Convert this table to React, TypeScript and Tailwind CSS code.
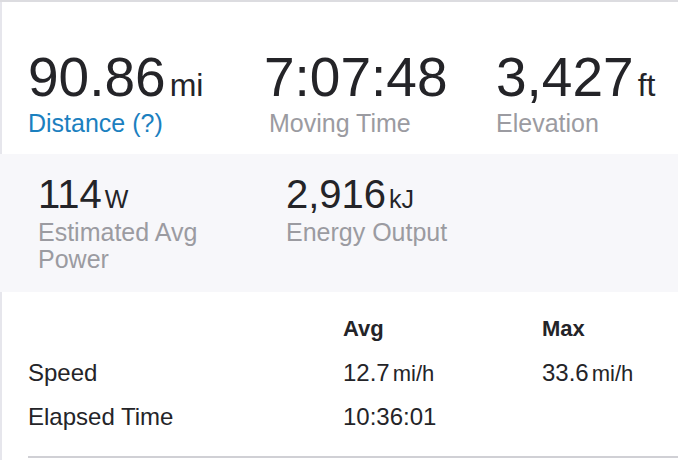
const stats = [
  { value: "90.86", unit: "mi", label: "Distance (?)", link: true, width: "w-[236px]", shift: "" },
  { value: "7:07:48", unit: "", label: "Moving Time", link: false, width: "w-[232px]", shift: "ml-[5px]" },
  { value: "3,427", unit: "ft", label: "Elevation", link: false, width: "w-[170px]", shift: "" },
];

const extra = [
  { value: "114", unit: "W", label: "Estimated Avg Power" },
  { value: "2,916", unit: "kJ", label: "Energy Output" },
];

const rows = [
  { name: "Speed", avg: "12.7", avgUnit: "mi/h", max: "33.6", maxUnit: "mi/h" },
  { name: "Elapsed Time", avg: "10:36:01", avgUnit: "", max: "", maxUnit: "" },
];

function Cell({ value, unit, width }: { value: string; unit: string; width: string }) {
  return (
    <div className={width + " text-[24px] leading-[44px] whitespace-nowrap"}>
      {value}
      {unit && <span className="text-[22px] leading-none ml-[3px]">{unit}</span>}
    </div>
  );
}

export default function App() {
  return (
    <div className="w-[678px] h-[460px] overflow-hidden bg-white text-[#242428] font-['Liberation_Sans',Arial,sans-serif]">
      <div className="h-[2px] bg-[#dcdce0]" />

      {/* main stats */}
      <div className="h-[152px] border-l-2 border-[#e6e6ec] pl-[26px] pt-[48px] flex">
        {stats.map((s) => (
          <div key={s.label} className={s.width}>
            <div className="flex items-baseline whitespace-nowrap">
              <span className="text-[55px] leading-none">{s.value}</span>
              {s.unit && <span className="text-[32px] leading-none ml-[4px]">{s.unit}</span>}
            </div>
            <div
              className={
                "mt-[4px] text-[25px] leading-[28px] whitespace-nowrap " +
                s.shift +
                " " +
                (s.link ? "text-[#1b80bf]" : "text-[#9b9ba1]")
              }
            >
              {s.label}
            </div>
          </div>
        ))}
      </div>

      {/* secondary stats */}
      <div className="h-[138px] bg-[#f7f7fa] pl-[38px] pt-[20px] flex">
        {extra.map((e) => (
          <div key={e.label} className="w-[248px]">
            <div className="flex items-baseline whitespace-nowrap">
              <span className="text-[40px] leading-none">{e.value}</span>
              <span className="text-[25px] leading-none ml-[3px]">{e.unit}</span>
            </div>
            <div className="mt-[5px] max-w-[210px] text-[25px] leading-[27px] text-[#9b9ba1]">
              {e.label}
            </div>
          </div>
        ))}
      </div>

      {/* avg / max table */}
      <div className="h-[168px] border-l-2 border-[#e6e6ec] pl-[26px] pt-[15px]">
        <div className="flex text-[22px] leading-[44px] font-bold">
          <div className="w-[315px]" />
          <div className="w-[199px]">Avg</div>
          <div>Max</div>
        </div>
        {rows.map((r) => (
          <div key={r.name} className="flex">
            <Cell value={r.name} unit="" width="w-[315px]" />
            <Cell value={r.avg} unit={r.avgUnit} width="w-[199px]" />
            <Cell value={r.max} unit={r.maxUnit} width="" />
          </div>
        ))}
        <div className="mt-[17px] h-[2px] bg-[#d0d0d5]" />
      </div>
    </div>
  );
}
